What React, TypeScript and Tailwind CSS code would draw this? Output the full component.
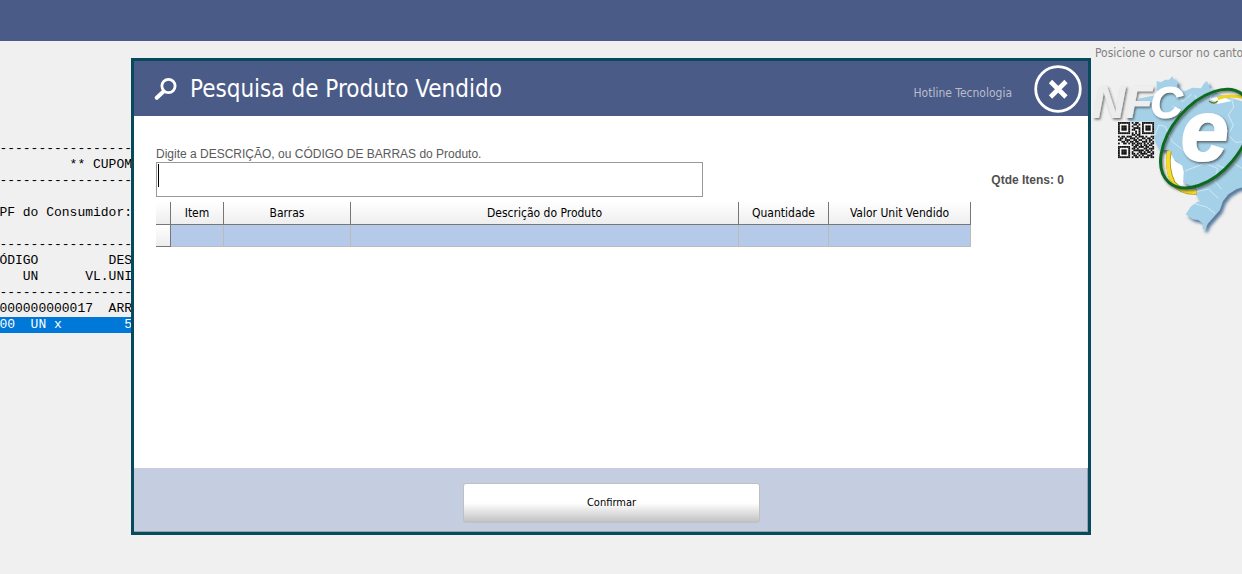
import React from "react";

const receiptLines = [
  "-----------------",
  "         ** CUPOM",
  "-----------------",
  "",
  "PF do Consumidor:",
  "",
  "-----------------",
  "ÓDIGO         DES",
  "   UN      VL.UNI",
  "-----------------",
  "000000000017  ARR",
];

const qrRows = [
  "111111101011001111111",
  "100000100110101000001",
  "101110101001001011101",
  "101110100111101011101",
  "101110101100101011101",
  "100000100010101000001",
  "111111101010101111111",
  "000000001101100000000",
  "101101110010111010011",
  "011010011101001101101",
  "110011100110110010110",
  "001101011011001110101",
  "100110101101110101011",
  "000000001011010110110",
  "111111100110111011001",
  "100000101101000110111",
  "101110100111111011010",
  "101110101000110101101",
  "101110101101011110011",
  "100000100110101001110",
  "111111101011010111011",
];

function QrCode() {
  const cell = 108 / 21;
  return (
    <g>
      <rect x="98" y="260" width="110" height="110" fill="#f4f4f4" />
      {qrRows.map((row, y) =>
        row.split("").map((bit, x) =>
          bit === "1" ? (
            <rect key={`${x}-${y}`} x={99 + x * cell} y={261 + y * cell} width={cell + 0.3} height={cell + 0.3} fill="#111" />
          ) : null
        )
      )}
    </g>
  );
}

function NfceLogo() {
  return (
    <svg viewBox="18 120 453 495" className="h-[165px] w-[151px]" role="img" aria-label="NFC-e">
      <defs>
        <filter id="shade" x="-20%" y="-20%" width="150%" height="150%">
          <feDropShadow dx="4" dy="5" stdDeviation="3" floodColor="#333" floodOpacity="0.65" />
        </filter>
        <filter id="mapShade" x="-20%" y="-20%" width="150%" height="150%">
          <feDropShadow dx="8" dy="9" stdDeviation="4" floodColor="#355a86" floodOpacity="0.8" />
        </filter>
      </defs>
      <path
        filter="url(#mapShade)"
        fill="#a5d1e8"
        d="M215 138 L228 142 L240 134 L252 134 L262 124 L268 136 L278 138 L276 154 L286 166 L300 168 L322 158 L348 160 L358 144 L366 138 L374 158 L382 160 L390 176 L410 180 L440 190 L490 205 L490 452 L455 462 L430 478 L414 498 L404 526 L384 548 L368 566 L360 584 L352 582 L354 566 L342 556 L322 552 L302 538 L318 514 L335 502 L347 498 L333 480 L335 462 L318 452 L292 440 L296 405 L278 380 L262 370 L250 345 L225 345 L212 325 L205 300 L170 290 L130 255 L128 232 L150 205 L165 190 L215 180 Z"
      />
      <path
        fill="none"
        stroke="#d8edf7"
        strokeWidth="2.5"
        d="M280 160 L292 200 L320 178 M382 160 L374 200 L400 205 M210 300 L222 270 L240 274 L262 320 L300 350 M262 212 L296 240 M330 180 L340 210 M430 240 L445 270 L430 300 L452 322 L480 320 M440 190 L446 216 L430 240 M395 390 L420 400 L440 380 L470 400 M300 408 L330 396 L360 385 L398 400 L390 440 L410 462 M335 470 L370 462 L400 490 M325 505 L365 516 L390 535"
      />
      <path fill="#fff" d="M258 358 L270 378 L292 392 L296 412 L294 450 Q266 448 254 420 Z M375 192 Q408 178 440 198 L400 206 Z" />
      <path fill="none" stroke="#b49716" strokeWidth="14" d="M253 348 Q243 400 265 444 Q290 475 335 472" />
      <path fill="none" stroke="#f2dc2c" strokeWidth="11" d="M252 348 Q242 400 263 444 Q290 474 334 471" />
      <path fill="none" stroke="#ecd424" strokeWidth="10" d="M398 190 Q430 178 480 188" />
      <path fill="none" stroke="#6f7a24" strokeWidth="4" d="M372 198 Q386 210 398 198" />
      <g fontFamily="'Liberation Sans', Arial, sans-serif" fontWeight="700" fontStyle="italic" filter="url(#shade)">
        <text x="22" y="250" fontSize="138" fill="#ececec">N</text>
        <text x="120" y="250" fontSize="136" fill="#eeeeee">F</text>
        <text x="196" y="250" fontSize="134" fill="#fff" stroke="#fff" strokeWidth="3">C</text>
      </g>
      <g filter="url(#shade)">
        <ellipse cx="363" cy="311" rx="172" ry="104" transform="rotate(-50 363 311)" fill="none" stroke="#0f6a20" strokeWidth="9" />
        <text x="287" y="374" fontSize="258" fill="#fff" stroke="#fff" strokeWidth="6" fontFamily="'Liberation Sans', Arial, sans-serif" fontWeight="700" fontStyle="italic">e</text>
      </g>
      <QrCode />
    </svg>
  );
}

const columns = [
  { label: "Item", width: "w-[53px]" },
  { label: "Barras", width: "w-[127px]" },
  { label: "Descrição do Produto", width: "w-auto" },
  { label: "Quantidade", width: "w-[90px]" },
  { label: "Valor Unit Vendido", width: "w-[142px]" },
];

function ProductTable() {
  return (
    <table className="mt-[5px] w-[815px] max-w-full table-fixed border-separate border-spacing-0 text-[12px] leading-4 text-black">
      <thead>
        <tr className="h-[23px]">
          <th aria-label="Seleção" className="w-[15px] border-r border-b border-[#777] bg-linear-to-b from-white to-[#ededed] p-0" />
          {columns.map((c) => (
            <th key={c.label} className={`${c.width} border-r border-b border-[#777] bg-linear-to-b from-white to-[#eeeeee] p-0 font-normal`}>
              {c.label}
            </th>
          ))}
        </tr>
      </thead>
      <tbody>
        <tr className="h-[22px]">
          <td className="border-r border-b border-[#777] bg-linear-to-b from-white to-[#ededed] p-0" />
          {columns.map((c) => (
            <td key={c.label} className="border-r border-b border-[#bbbbbb] bg-[#b5c9e9] p-0" />
          ))}
        </tr>
      </tbody>
    </table>
  );
}

function SearchDialog() {
  return (
    <section
      role="dialog"
      aria-labelledby="dialog-title"
      className="absolute top-[17px] right-[151px] left-[131px] flex flex-col border-[3px] border-[#064a5c] bg-white"
    >
      <header className="flex h-[55px] items-center bg-[#4a5b88] pr-[6px] pl-5 text-white">
        <svg viewBox="0 0 24 24" className="h-6 w-6" fill="none" stroke="#fff" aria-hidden="true">
          <circle cx="14.5" cy="9" r="6.6" strokeWidth="2.8" />
          <path d="M9.5 14.5 L2.8 20.8" strokeWidth="4" strokeLinecap="round" />
        </svg>
        <h1 id="dialog-title" className="ml-3 grow text-[24px] leading-8">Pesquisa de Produto Vendido</h1>
        <span className="mt-2 mr-[22px] text-[12px] leading-4 text-[#b9bdca]">Hotline Tecnologia</span>
        <button type="button" aria-label="Fechar" className="h-12 w-12">
          <svg viewBox="0 0 48 48" className="h-12 w-12" fill="none" stroke="#fff" aria-hidden="true">
            <circle cx="24" cy="24" r="22.3" strokeWidth="2.8" />
            <path d="M16.5 16.5 L32 32 M32 16.5 L16.5 32" strokeWidth="4.6" />
          </svg>
        </button>
      </header>
      <div className="flex h-[352px] items-start justify-between pt-[30px] pr-6 pl-[22px]">
        <div className="flex flex-col">
          <label htmlFor="produto" className="font-['Liberation_Sans',Arial,sans-serif] text-[12px] leading-4 text-[#5a5a5a]">
            Digite a DESCRIÇÃO, ou CÓDIGO DE BARRAS do Produto.
          </label>
          <div className="relative w-[547px] max-w-full">
            <input
              id="produto"
              type="text"
              className="block h-[35px] w-full border border-[#999] bg-white px-[2px] pb-2 text-[20px] text-black caret-transparent outline-none"
            />
            <span aria-hidden="true" className="pointer-events-none absolute top-[2px] left-[2px] h-[23px] w-px bg-black" />
          </div>
          <ProductTable />
        </div>
        <p className="mt-[26px] font-['Liberation_Sans',Arial,sans-serif] text-[12px] leading-4 font-bold text-[#505050]">Qtde Itens: 0</p>
      </div>
      <footer className="flex h-[64px] items-center justify-center border-r border-b border-[#93a5ad] bg-[#c5cde0] pt-[6px] pl-[2px]">
        <button
          type="button"
          className="h-10 w-[297px] rounded-[3px] border border-[#c0c0c0] bg-linear-to-b from-white from-50% to-[#c2c2c2] text-[11px] leading-4 text-black"
        >
          Confirmar
        </button>
      </footer>
    </section>
  );
}

export default function App() {
  return (
    <div className="flex min-h-screen flex-col overflow-hidden bg-[#f0f0f0] font-['DejaVu_Sans_Condensed','Noto_Sans',sans-serif]">
      <div className="h-[41px] bg-[#4a5b88]" />
      <main className="relative flex grow items-start justify-between">
        <div className="mt-[100px] flex w-[132px] flex-col overflow-hidden font-['Liberation_Mono',monospace] text-[13px] leading-4 text-black">
          {receiptLines.map((line, i) => (
            <div key={i} className="flex h-4 justify-end whitespace-pre">{line}</div>
          ))}
          <div className="flex h-4 justify-end bg-[#0078d7] whitespace-pre text-white">{"00  UN x        5"}</div>
        </div>
        <aside className="flex w-[151px] flex-col overflow-hidden">
          <p className="mt-1 pl-1 text-[12px] leading-4 whitespace-nowrap text-[#808080]">Posicione o cursor no canto</p>
          <div className="mt-[14px]">
            <NfceLogo />
          </div>
        </aside>
        <SearchDialog />
      </main>
    </div>
  );
}
